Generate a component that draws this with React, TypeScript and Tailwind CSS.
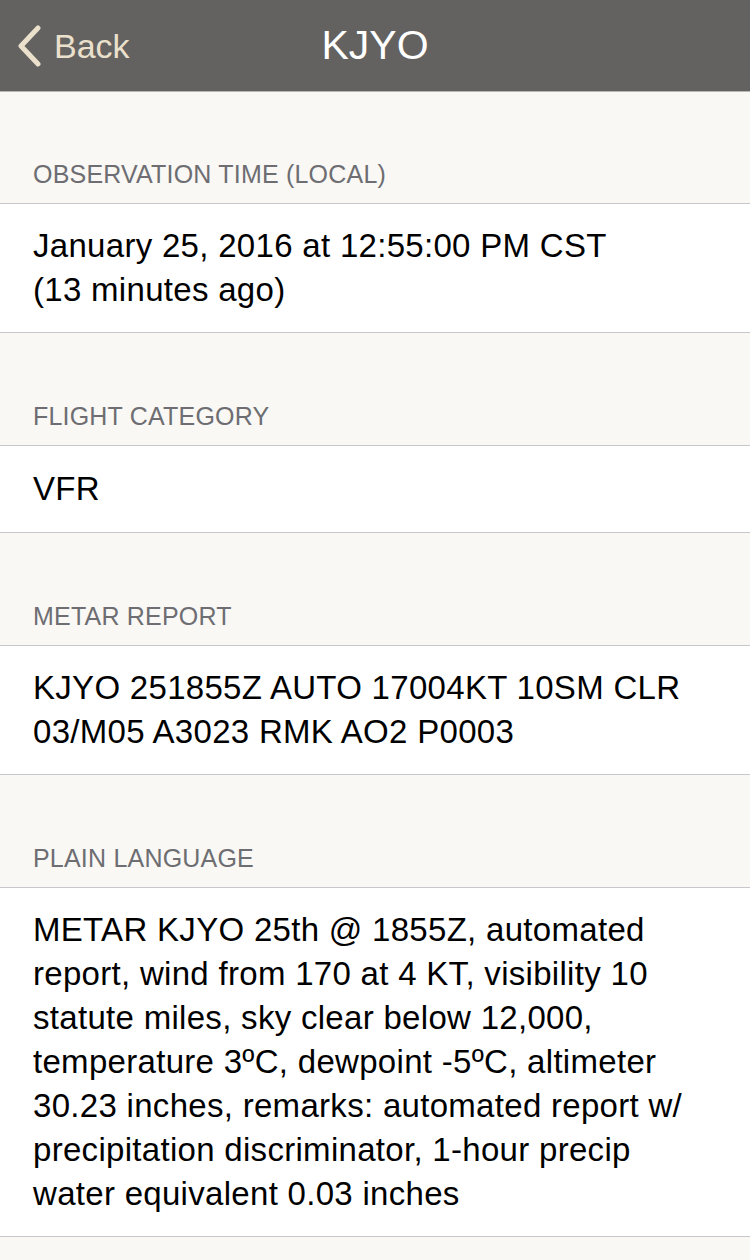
import React from 'react';

const sections: { label: string; lines: string[] }[] = [
  {
    label: 'OBSERVATION TIME (LOCAL)',
    lines: ['January 25, 2016 at 12:55:00 PM CST', '(13 minutes ago)'],
  },
  { label: 'FLIGHT CATEGORY', lines: ['VFR'] },
  {
    label: 'METAR REPORT',
    lines: ['KJYO 251855Z AUTO 17004KT 10SM CLR', '03/M05 A3023 RMK AO2 P0003'],
  },
  {
    label: 'PLAIN LANGUAGE',
    lines: [
      'METAR KJYO 25th @ 1855Z, automated',
      'report, wind from 170 at 4 KT, visibility 10',
      'statute miles, sky clear below 12,000,',
      'temperature 3ºC, dewpoint -5ºC, altimeter',
      '30.23 inches, remarks: automated report w/',
      'precipitation discriminator, 1-hour precip',
      'water equivalent 0.03 inches',
    ],
  },
];

const App: React.FC = () => (
  <div className="min-h-[1260px] bg-[#f9f8f4] font-['Liberation_Sans',Arial,sans-serif]">
    <header className="relative flex h-[92px] items-center justify-center border-b border-[#b9b8b4] bg-[#636260]">
      <div className="absolute left-[16px] top-0 flex h-full items-center gap-[12px] text-[#ebe0cc]">
        <svg width="26" height="42" viewBox="0 0 26 42" fill="none">
          <path d="M22 3 L5 21 L22 39" stroke="#ebe0cc" strokeWidth="5" strokeLinecap="round" strokeLinejoin="round" />
        </svg>
        <span className="text-[34px] leading-none">Back</span>
      </div>
      <h1 className="text-[41px] leading-none text-white">KJYO</h1>
    </header>

    {sections.map((s, i) => (
      <section key={s.label}>
        <div
          className={`px-[33px] pb-[13px] text-[25px] leading-[32px] tracking-[0.2px] text-[#6d6d72] ${
            i === 0 ? 'pt-[66px]' : 'pt-[67px]'
          }`}
        >
          {s.label}
        </div>
        <div
          className={`border-y border-[#c8c7cc] bg-white px-[33px] text-[33px] leading-[44px] tracking-[0.3px] text-black ${
            s.lines.length === 1 ? 'py-[21px]' : 'py-[20px]'
          }`}
        >
          {s.lines.map((l) => (
            <div key={l} className="whitespace-nowrap">
              {l}
            </div>
          ))}
        </div>
      </section>
    ))}
  </div>
);

export default App;
